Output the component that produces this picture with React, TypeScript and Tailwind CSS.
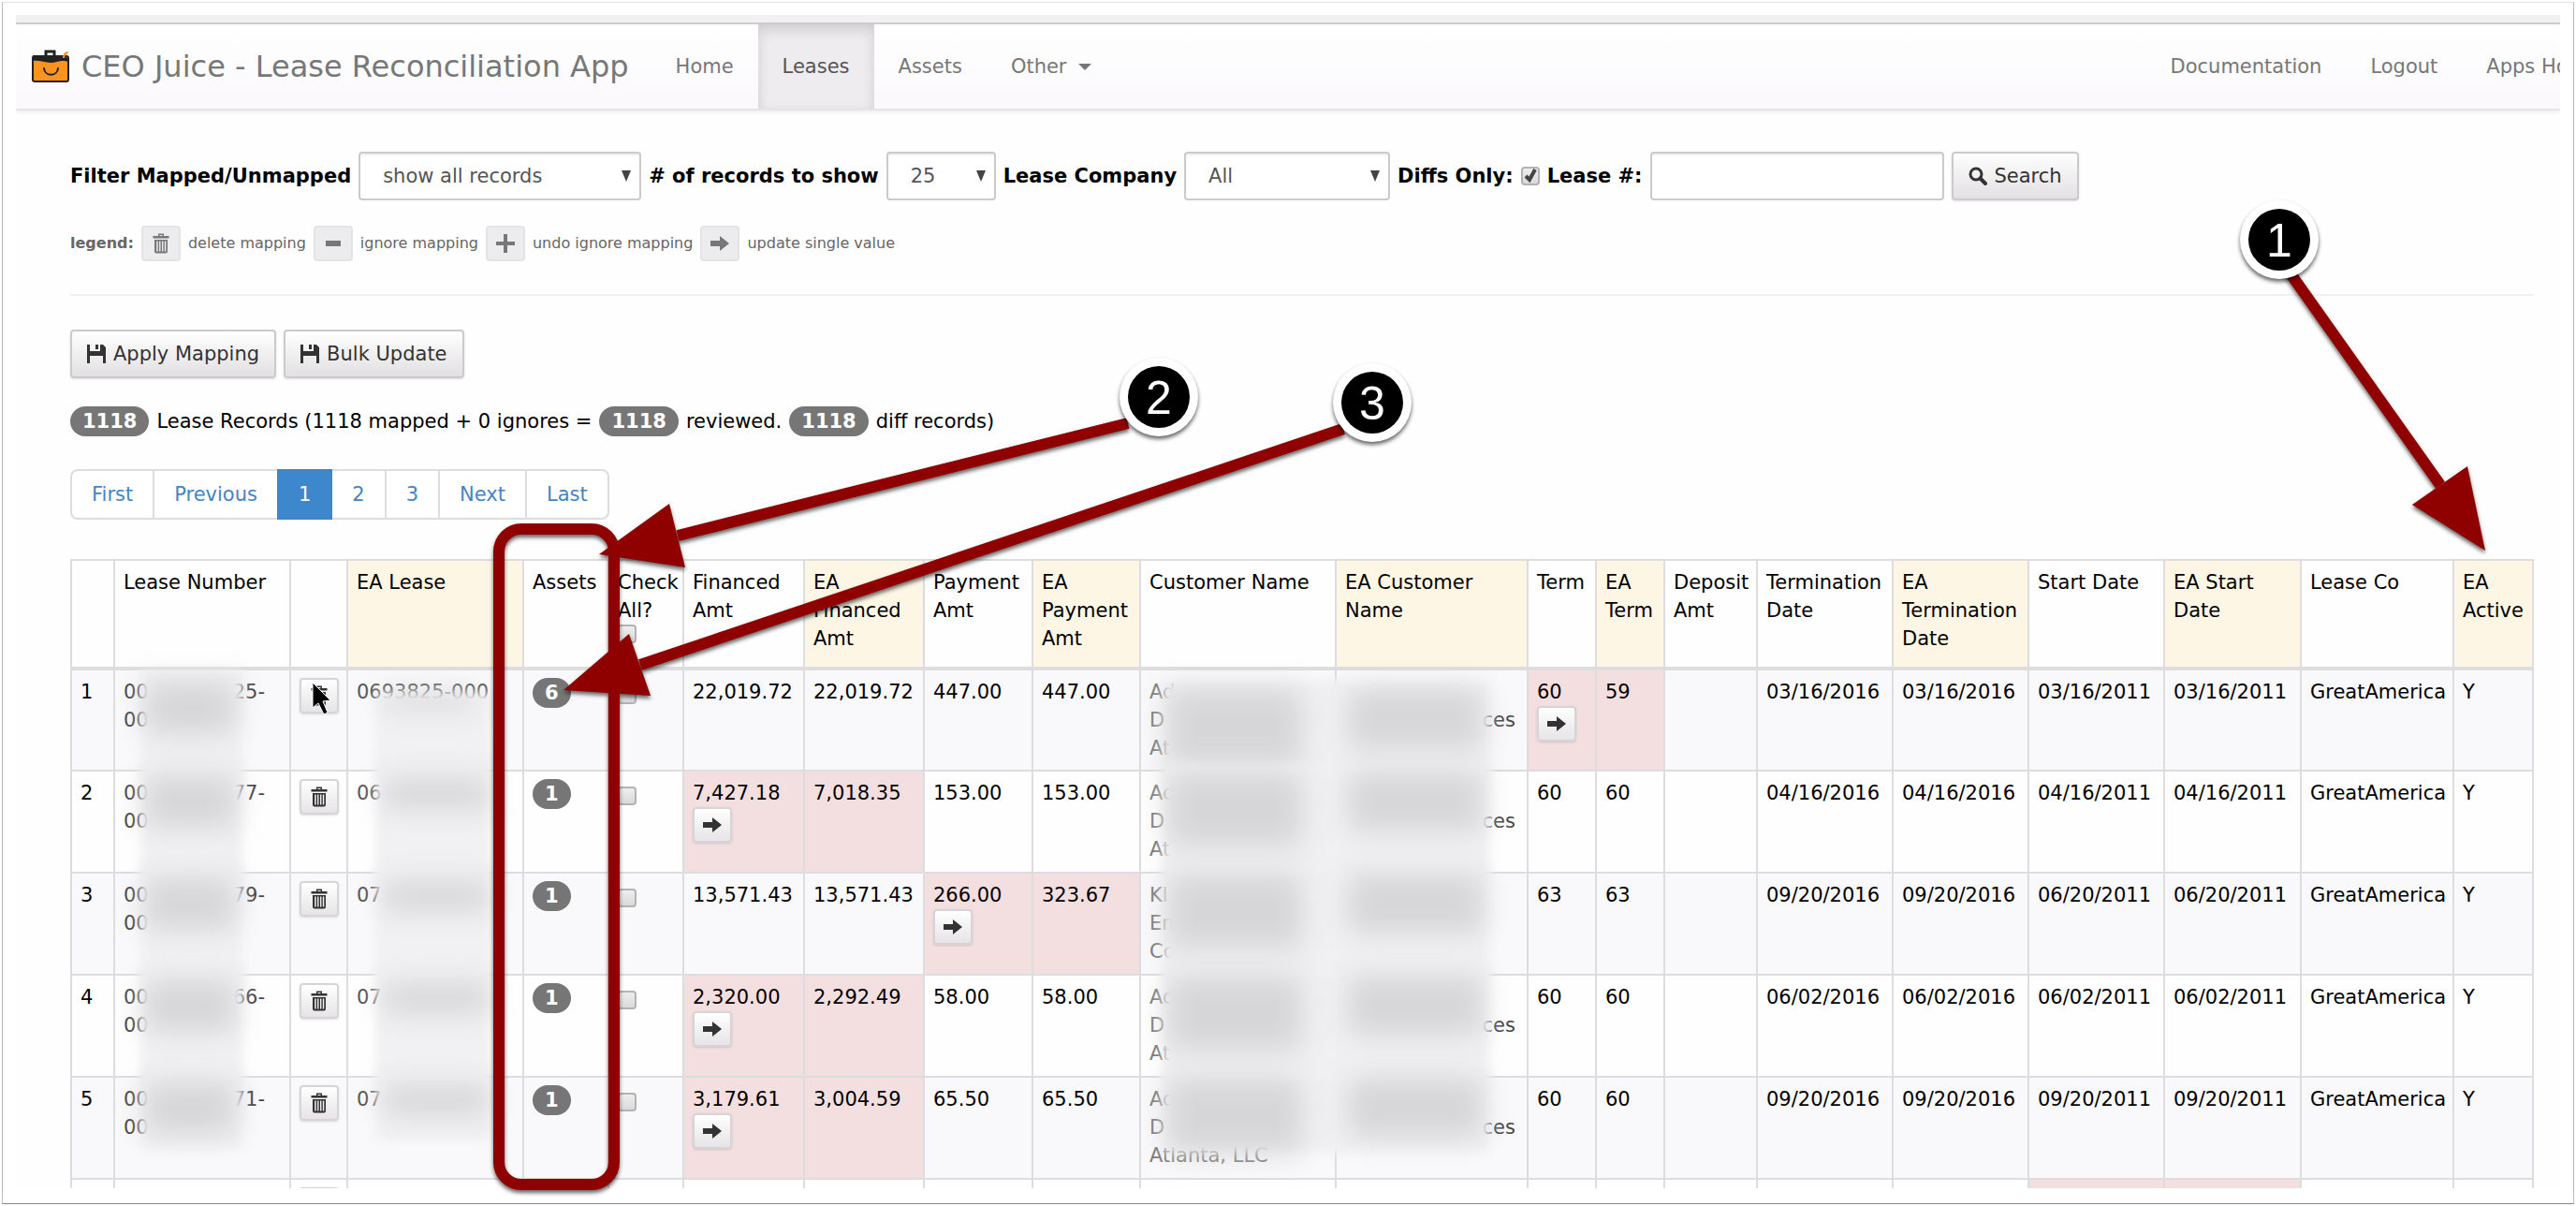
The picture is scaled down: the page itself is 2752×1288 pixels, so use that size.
import clsx from "clsx";
import type { FC, ReactNode } from "react";

const columns = [
  { label: "", width: "w-[46px]" },
  { label: "Lease Number", width: "w-[188px]" },
  { label: "", width: "w-[61px]" },
  { label: "EA Lease", width: "w-[188px]", ea: true },
  { label: "Assets", width: "w-[91px]" },
  { label: "Check All?", width: "w-[80px]" },
  { label: "Financed Amt", width: "w-[129px]" },
  { label: "EA Financed Amt", width: "w-[128px]", ea: true },
  { label: "Payment Amt", width: "w-[116px]" },
  { label: "EA Payment Amt", width: "w-[115px]", ea: true },
  { label: "Customer Name", width: "w-[209px]" },
  { label: "EA Customer Name", width: "w-[205px]", ea: true },
  { label: "Term", width: "w-[73px]" },
  { label: "EA Term", width: "w-[73px]", ea: true },
  { label: "Deposit Amt", width: "w-[99px]" },
  { label: "Termination Date", width: "w-[145px]" },
  { label: "EA Termination Date", width: "w-[145px]", ea: true },
  { label: "Start Date", width: "w-[145px]" },
  { label: "EA Start Date", width: "w-[146px]", ea: true },
  { label: "Lease Co", width: "w-[163px]" },
  { label: "EA Active", width: "w-[85px]", ea: true },
];

const rows = [
  {
    leaseEnd: "25-", eaLease: "0693825-000", assets: 6, financed: ["22,019.72", "22,019.72"], payment: ["447.00", "447.00"],
    customer: ["Ad", "D", "At"], eaCustomer: "ces", term: ["60", "59"], end: "03/16/2016", start: "03/16/2011",
  },
  {
    leaseEnd: "77-", eaLease: "06", assets: 1, financed: ["7,427.18", "7,018.35"], payment: ["153.00", "153.00"],
    customer: ["Ad", "D", "At"], eaCustomer: "ces", term: ["60", "60"], end: "04/16/2016", start: "04/16/2011",
  },
  {
    leaseEnd: "79-", eaLease: "07", assets: 1, financed: ["13,571.43", "13,571.43"], payment: ["266.00", "323.67"],
    customer: ["Kl", "En", "Co"], eaCustomer: "", term: ["63", "63"], end: "09/20/2016", start: "06/20/2011",
  },
  {
    leaseEnd: "66-", eaLease: "07", assets: 1, financed: ["2,320.00", "2,292.49"], payment: ["58.00", "58.00"],
    customer: ["Ad", "D", "At"], eaCustomer: "ces", term: ["60", "60"], end: "06/02/2016", start: "06/02/2011",
  },
  {
    leaseEnd: "71-", eaLease: "07", assets: 1, financed: ["3,179.61", "3,004.59"], payment: ["65.50", "65.50"],
    customer: ["Ad", "D", "Atlanta, LLC"], eaCustomer: "ces", term: ["60", "60"], end: "09/20/2016", start: "09/20/2011",
  },
];

const pages = ["First", "Previous", "1", "2", "3", "Next", "Last"];

const TrashIcon = () => (
  <svg viewBox="0 0 20 24" className="h-6 w-5" fill="currentColor">
    <path d="M7 4V1.500h6V4h5.500v2.500h-17V4zm1.500 0h3V3h-3z" />
    <path d="M3 8h14v12.500a2 2 0 0 1-2 2H5a2 2 0 0 1-2-2zm2.200 1.500v11h1.500v-11zm2.900 0v11h1.400v-11zm2.900 0v11h1.400v-11zm2.800 0v11h1.500v-11z" />
  </svg>
);

const ArrowIcon = () => (
  <svg viewBox="0 0 22 20" className="h-5 w-[22px]" fill="currentColor">
    <path d="M1 7h10V2l10 8-10 8v-5H1z" />
  </svg>
);

const MinusIcon = () => (
  <svg viewBox="0 0 20 20" className="size-5" fill="currentColor">
    <path d="M2 7h16v6H2z" />
  </svg>
);

const PlusIcon = () => (
  <svg viewBox="0 0 20 20" className="size-5" fill="currentColor">
    <path d="M8 0h4v8h8v4h-8v8H8v-8H0V8h8z" />
  </svg>
);

const SaveIcon = () => (
  <svg viewBox="0 0 20 20" className="size-5" fill="currentColor">
    <path d="M0 0h3v7h11V0h3l3 3v17h-3v-8H3v8H0zM9 0h3v5H9z" />
  </svg>
);

const SearchIcon = () => (
  <svg viewBox="0 0 20 20" className="size-5" fill="none" stroke="currentColor">
    <circle cx="8" cy="8" r="6" strokeWidth="3" />
    <path d="m12.500 12.500 5.500 5.500" strokeWidth="4" strokeLinecap="round" />
  </svg>
);

const Logo = () => (
  <svg viewBox="0 0 42 36" className="h-9 w-[42px]">
    <path d="M16 7V2h9v5" fill="none" stroke="#222" strokeWidth="3" />
    <rect x="2" y="7" width="38" height="27" rx="2" fill="#ff9320" stroke="#222" strokeWidth="2" />
    <path d="M2 6h33l5 4v3c-8-3-12 1-19 1S9 11 2 12z" fill="#222" />
    <path d="M34 9c0-4 2-7 6-7l-1 3c-2 0-3 2-3 4z" fill="#ff9320" />
    <path d="M14 20c1 9 14 9 15 0" fill="none" stroke="#222" strokeWidth="2" strokeLinecap="round" />
  </svg>
);

const Button: FC<{ children: ReactNode }> = ({ children }) => (
  <button
    type="button"
    className="flex h-[52px] items-center gap-2 rounded border-2 border-[#cccacc] bg-linear-to-b from-white to-[#e2e0e2] px-4 text-[#333] shadow-sm"
  >
    {children}
  </button>
);

const IconButton: FC<{ label: string; children: ReactNode; muted?: boolean }> = ({ label, children, muted }) => (
  <button
    type="button"
    aria-label={label}
    className={clsx(
      "flex h-[38px] w-[42px] items-center justify-center rounded border-2",
      muted ? "border-[#e4e3e5] bg-[#ecebed] text-[#777]" : "border-[#d6d4d6] bg-linear-to-b from-white to-[#e6e4e6] text-[#333] shadow-sm"
    )}
  >
    {children}
  </button>
);

const Checkbox: FC<{ label?: string; id?: string; checked?: boolean }> = ({ label, id, checked }) => (
  <span className="relative block size-5">
    <input
      id={id}
      type="checkbox"
      aria-label={label}
      defaultChecked={checked}
      className="block size-5 appearance-none rounded border-2 border-[#b4b3b4] bg-linear-to-b from-[#efeeef] to-[#dbdadb]"
    />
    {checked && (
      <svg viewBox="0 0 20 20" className="pointer-events-none absolute inset-0" fill="none" stroke="#444" strokeWidth="4">
        <path d="m5 10 4 4 6-11" />
      </svg>
    )}
  </span>
);

const Select: FC<{ id: string; width: string; options: string[] }> = ({ id, width, options }) => (
  <span className={clsx("relative block", width)}>
    <select
      id={id}
      className="h-[52px] w-full appearance-none rounded border-2 border-[#cccacc] bg-white px-6 text-[#555] shadow-[inset_0_2px_2px_#0001]"
    >
      {options.map((option) => (
        <option key={option}>{option}</option>
      ))}
    </select>
    <svg viewBox="0 0 10 12" className="pointer-events-none absolute top-5 right-[11px] h-3 w-[10px]" fill="#444">
      <path d="M0 0h10L5 12z" />
    </svg>
  </span>
);

const Badge: FC<{ children: ReactNode }> = ({ children }) => (
  <span className="flex h-8 items-center rounded-full bg-[#777677] px-[13px] font-bold text-white">{children}</span>
);

const Cell: FC<{ children?: ReactNode; diff?: boolean }> = ({ children, diff }) => (
  <td className={clsx("relative border-2 border-[#dddcde] py-2 pr-1 pl-[9px]", diff && "bg-[#f3dfdf]")}>{children}</td>
);

// A pair of values: both cells turn red when they differ, and the first can be overwritten
const PairCells: FC<{ values: string[] }> = ({ values }) => {
  const diff = values[0] !== values[1];
  return (
    <>
      <Cell diff={diff}>
        {values[0]}
        {diff && (
          <IconButton label="update single value">
            <ArrowIcon />
          </IconButton>
        )}
      </Cell>
      <Cell diff={diff}>{values[1]}</Cell>
    </>
  );
};

// Hides private values
const Veil: FC<{ className: string; spot: string }> = ({ className, spot }) => (
  <span className={clsx("absolute z-10 bg-[#f1f0f2] blur-[5px]", className)}>
    <span className={clsx("absolute bg-[#d6d5d7] blur-[14px]", spot)} />
  </span>
);

const Navbar = () => (
  <nav className="overflow-hidden border-b-2 border-[#e6e4e6] bg-linear-to-b from-white to-[#faf8fb] text-[#777] shadow-[0_2px_4px_#0001]">
    <div className="-mr-[68px] flex h-[90px] items-stretch whitespace-nowrap">
      <a href="#home" className="flex items-center gap-3 pr-6 pl-4 text-[32px]">
        <Logo />
        CEO Juice - Lease Reconciliation App
      </a>
      <a href="#home" className="flex items-center px-[26px]">Home</a>
      <a href="#leases" className="flex items-center bg-[#eeecee] px-[26px] text-[#555] shadow-[inset_0_6px_14px_#0002]">Leases</a>
      <a href="#assets" className="flex items-center px-[26px]">Assets</a>
      <a href="#other" className="flex items-center gap-3 px-[26px]">
        Other
        <svg viewBox="0 0 14 7" className="h-[7px] w-[14px]" fill="currentColor">
          <path d="M0 0h14L7 7z" />
        </svg>
      </a>
      <a href="#documentation" className="ml-auto flex items-center px-[26px]">Documentation</a>
      <a href="#logout" className="flex items-center px-[26px]">Logout</a>
      <a href="#apps" className="flex items-center px-[26px]">Apps Home</a>
    </div>
  </nav>
);

const Filters = () => (
  <form className="flex items-center gap-2 font-bold whitespace-nowrap [&_button]:font-normal [&_select]:font-normal">
    <label htmlFor="mapped">Filter Mapped/Unmapped</label>
    <Select id="mapped" width="w-[302px]" options={["show all records"]} />
    <label htmlFor="count"># of records to show</label>
    <Select id="count" width="w-[117px]" options={["25"]} />
    <label htmlFor="company">Lease Company</label>
    <Select id="company" width="w-[220px]" options={["All"]} />
    <label htmlFor="diffs">Diffs Only:</label>
    <Checkbox id="diffs" checked />
    <label htmlFor="lease">Lease #:</label>
    <input id="lease" type="text" className="h-[52px] w-[314px] rounded border-2 border-[#cccacc] bg-white px-5 shadow-[inset_0_2px_2px_#0001]" />
    <Button>
      <SearchIcon />
      Search
    </Button>
  </form>
);

const Legend = () => (
  <div className="mt-[27px] flex items-center gap-2 text-base text-[#666]">
    <b>legend:</b>
    <IconButton label="delete mapping" muted><TrashIcon /></IconButton>
    delete mapping
    <IconButton label="ignore mapping" muted><MinusIcon /></IconButton>
    ignore mapping
    <IconButton label="undo ignore mapping" muted><PlusIcon /></IconButton>
    undo ignore mapping
    <IconButton label="update single value" muted><ArrowIcon /></IconButton>
    update single value
  </div>
);

const LeaseTable = () => (
  <table className="mt-[42px] w-full table-fixed border-collapse text-left">
    <colgroup>
      {columns.map((column, i) => (
        <col key={i} className={column.width} />
      ))}
    </colgroup>
    <thead>
      <tr className="h-[116px] align-top">
        {columns.map((column, i) => (
          <th
            key={i}
            className={clsx("border-2 border-b-4 border-[#dddcde] pt-2 pr-1 pl-[9px] font-normal", column.ea && "bg-[#fdf6e4]")}
          >
            {column.label}
            {column.label === "Check All?" && <Checkbox label="Check all" />}
          </th>
        ))}
      </tr>
    </thead>
    <tbody>
      {rows.map((row, i) => (
        <tr key={i} className="h-[109px] align-top odd:bg-[#f9f8fa]">
          <Cell>{i + 1}</Cell>
          <Cell>
            <span className="flex justify-between pr-[22px] text-[#444]">
              <span>00</span>
              <span>{row.leaseEnd}</span>
            </span>
            <span className="text-[#444]">00</span>
            <Veil
              className={clsx("left-7 w-[108px]", i === 0 ? "top-0" : "-top-2", i === 4 ? "bottom-8" : "-bottom-2")}
              spot="top-3 left-1 h-14 w-24"
            />
          </Cell>
          <Cell>
            <IconButton label="delete mapping"><TrashIcon /></IconButton>
          </Cell>
          <Cell>
            <span className="text-[#555]">{row.eaLease}</span>
            <Veil
              className={clsx("left-[30px] w-[122px]", i === 0 ? "top-[24px]" : "-top-2", i === 4 ? "bottom-10" : "-bottom-2")}
              spot={i === 0 ? "top-0 left-2 h-4 w-24" : "top-4 left-2 h-8 w-28"}
            />
          </Cell>
          <Cell>
            <span className="flex">
              <Badge>{row.assets}</Badge>
            </span>
          </Cell>
          <Cell>
            <span className="block pt-2">
              <Checkbox label={`Select row ${i + 1}`} />
            </span>
          </Cell>
          <PairCells values={row.financed} />
          <PairCells values={row.payment} />
          <Cell>
            {row.customer.map((line) => (
              <span key={line} className="block text-[#777]">{line}</span>
            ))}
            <Veil
              className={clsx("-right-2 left-6", i === 0 ? "top-3" : "-top-2", i === 4 ? "bottom-[28px]" : "-bottom-2")}
              spot="top-2 left-1 h-20 w-36"
            />
          </Cell>
          <Cell>
            <span className="block pt-[30px] pr-2 text-right text-[#444]">{row.eaCustomer}</span>
            <Veil
              className={clsx("right-10 -left-2", i === 0 ? "top-3" : "-top-2", i === 4 ? "bottom-[28px]" : "-bottom-2")}
              spot="top-2 left-5 h-16 w-36"
            />
          </Cell>
          <PairCells values={row.term} />
          <Cell />
          <Cell>{row.end}</Cell>
          <Cell>{row.end}</Cell>
          <Cell>{row.start}</Cell>
          <Cell>{row.start}</Cell>
          <Cell>GreatAmerica</Cell>
          <Cell>Y</Cell>
        </tr>
      ))}
      <tr className="h-[109px] align-top">
        {columns.map((column, i) => (
          <Cell key={i} diff={column.label.endsWith("Start Date")}>
            {i === 2 && (
              <IconButton label="delete mapping"><TrashIcon /></IconButton>
            )}
          </Cell>
        ))}
      </tr>
    </tbody>
  </table>
);

const callouts = [
  { n: 1, x: 2435, y: 256, line: "M2444 288 2607 518", head: "2655,588 2577,539 2636,498" },
  { n: 2, x: 1238, y: 424, line: "M1205 452 724 572", head: "640,592 715,538 732,606" },
  { n: 3, x: 1466, y: 430, line: "M1435 458 684 710", head: "602,737 672,677 695,743" },
];

const Annotations = () => (
  <svg width="2752" height="1288" className="pointer-events-none absolute top-0 left-0 z-20">
    <path d="M334 729v27l6-5 6 12 4-2-5-12 8-1z" fill="#000" stroke="#fff" />
    <g className="drop-shadow-[0_3px_2px_#0009]" fill="#8f0000" stroke="#8f0000">
      <rect x="533" y="565" width="123" height="700" rx="24" fill="none" strokeWidth="12" />
      {callouts.map(({ n, line, head }) => (
        <g key={n}>
          <path d={line} strokeWidth="12" />
          <polygon points={head} stroke="none" />
        </g>
      ))}
    </g>
    {callouts.map(({ n, x, y }) => (
      <g key={n} className="drop-shadow-[0_3px_2px_#0009]">
        <circle cx={x} cy={y} r="42" fill="#fff" />
        <circle cx={x} cy={y} r="33" fill="#000" />
        <text x={x} y={y + 18} fill="#fff" textAnchor="middle" className="font-['Liberation_Sans',sans-serif] text-[50px]">
          {n}
        </text>
      </g>
    ))}
  </svg>
);

export default function App() {
  return (
    <div className="relative h-screen overflow-hidden bg-white p-[2px] font-['DejaVu_Sans',sans-serif] text-[21px] leading-[30px] text-black">
      <div className="h-full border border-t-[#e0e0e0] border-r-[#bbb] border-b-[#888] border-l-[#bbb] px-[14px] pt-[13px] pb-4">
        <div className="h-full overflow-hidden bg-[#fefefe]">
          <div className="h-[10px] border-b-2 border-[#cccacc] bg-[#f2f0f2]" />
          <Navbar />
          <main className="pt-11 pr-7 pl-[58px]">
            <Filters />
            <Legend />
            <hr className="mt-[35px] border-t-2 border-[#f3f0f5]" />
            <div className="mt-9 flex gap-2">
              <Button><SaveIcon />Apply Mapping</Button>
              <Button><SaveIcon />Bulk Update</Button>
            </div>
            <p className="mt-[30px] flex items-center gap-2">
              <Badge>1118</Badge> Lease Records (1118 mapped + 0 ignores = <Badge>1118</Badge> reviewed. <Badge>1118</Badge> diff records)
            </p>
            <div className="mt-[35px] flex">
              {pages.map((page) => (
                <a
                  key={page}
                  href={`#${page}`}
                  className={clsx(
                    "-mr-[2px] border-2 px-[21px] py-[10px] first:rounded-l-lg last:rounded-r-lg",
                    page === "1" ? "relative border-[#3d87cd] bg-[#3d87cd] text-white" : "border-[#dddcde] bg-white text-[#4484c5]"
                  )}
                >
                  {page}
                </a>
              ))}
            </div>
            <LeaseTable />
          </main>
        </div>
      </div>
      <Annotations />
    </div>
  );
}
